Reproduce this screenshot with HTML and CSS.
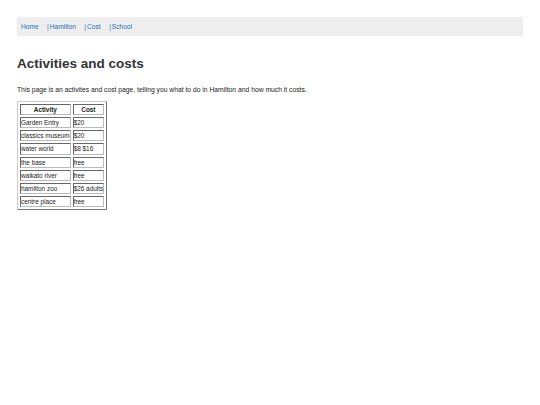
FILE: index.html
```html
<!DOCTYPE html>
<html>
<head>
<meta charset="utf-8">
<title>Activities and costs</title>
<link rel="stylesheet" href="styles.css">
</head>
<body>
<div class="page">
  <nav class="nav">
    <a href="#">Home</a><span class="sep">|</span><a href="#">Hamilton</a><span class="sep">|</span><a href="#">Cost</a><span class="sep">|</span><a href="#">School</a>
  </nav>
  <h1 class="title">Activities and costs</h1>
  <p class="intro">This page is an activites and cost page, telling you what to do in Hamilton and how much it costs.</p>
  <table class="costs">
    <tr><th>Activity</th><th>Cost</th></tr>
    <tr><td>Garden Entry</td><td>$20</td></tr>
    <tr><td>classics museum</td><td>$20</td></tr>
    <tr><td>water world</td><td>$8 $16</td></tr>
    <tr><td>the base</td><td>free</td></tr>
    <tr><td>waikato river</td><td>free</td></tr>
    <tr><td>hamilton zoo</td><td>$26 adults</td></tr>
    <tr><td>centre place</td><td>free</td></tr>
  </table>
</div>
</body>
</html>
```
FILE: styles.css
```css
html, body {
  margin: 0;
  padding: 0;
  background: #fff;
}
body {
  font-family: "Liberation Sans", Arial, sans-serif;
  color: #222;
}
.page {
  padding: 17px;
}
.nav {
  background: #eeeeee;
  height: 19px;
  display: flex;
  align-items: center;
  padding: 0 4px;
  font-size: 6.6px;
}
.nav a {
  color: #2a6ebb;
  text-decoration: none;
}
.nav .sep {
  color: #2a6ebb;
  margin-left: 8.5px;
  margin-right: 1px;
}
.title {
  font-size: 13.5px;
  font-weight: bold;
  color: #333;
  margin: 20px 0 0;
}
.intro {
  font-size: 6.75px;
  margin: 15px 0 0;
}
.costs {
  margin-top: 8px;
  border: 1px outset #ccc;
  border-spacing: 2px;
  font-size: 6.4px;
}
.costs th, .costs td {
  border: 1px inset #bbb;
  padding: 1px 0;
  line-height: 7.15px;
  text-align: left;
}
.costs th {
  text-align: center;
  font-weight: bold;
}
```
